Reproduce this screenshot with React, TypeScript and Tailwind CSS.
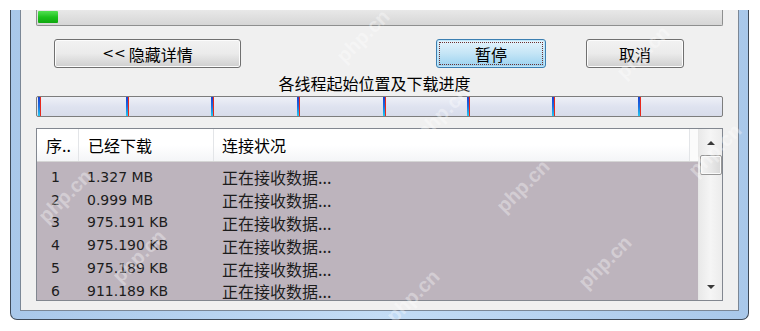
import React from "react";

const cjk = { fontFamily: '"Noto Sans CJK SC", "Noto Sans", sans-serif' };
const tahoma = { fontFamily: '"DejaVu Sans", "Noto Sans CJK SC", sans-serif' };

const rows = [
   { id: 1, done: "1.327 MB" },
   { id: 2, done: "0.999 MB" },
   { id: 3, done: "975.191 KB" },
   { id: 4, done: "975.190 KB" },
   { id: 5, done: "975.189 KB" },
   { id: 6, done: "911.189 KB" },
];

// thread start positions on the bar (px from left)
const marks = [1, 89, 174, 260, 346, 430, 515, 601];

// php.cn watermark spots (x, y centre)
const marksWm = [
   [62, 196],
   [136, 256],
   [520, 186],
   [410, 296],
   [602, 262],
   [712, 150],
   [440, 112],
   [640, 52],
   [360, 36],
];

function Btn({ children, focus, w }: { children: React.ReactNode; focus?: boolean; w: string }) {
   if (focus)
      return (
         <div className={`${w} h-[29px] rounded-[3px] border border-[#3c7fb1] p-[2px] bg-gradient-to-b from-[#e5f4fc] via-[#c4e5f6] to-[#98d1ef] shadow-[inset_0_0_0_1px_#bfe6fa]`}>
            <div className="w-full h-full border border-dotted border-[#6b3030] flex items-center justify-center text-[16px] text-black" style={cjk}>
               {children}
            </div>
         </div>
      );
   return (
      <div className={`${w} h-[29px] rounded-[3px] border border-[#707070] bg-gradient-to-b from-[#f2f2f2] via-[#ebebeb] to-[#cfcfcf] shadow-[inset_0_0_0_1px_#fcfcfc] flex items-center justify-center text-[16px] text-black`} style={cjk}>
         {children}
      </div>
   );
}

export default function App() {
   return (
      <div className="w-[760px] h-[331px] bg-white pt-[10px] pl-[10px] relative overflow-hidden">
         {/* window frame */}
         <div className="w-[739px] h-[310px] border-x border-b border-[#3f4a58] rounded-b-[7px] bg-gradient-to-r from-[#a9c8ea] via-[#c3dcf5] to-[#a9c8ea] px-[9px] pb-[8px]">
            <div className="w-[719px] h-[301px] border-x border-b border-[#7b8796] bg-[#f0f0f0] flex flex-col">
               {/* overall progress */}
               <div className="ml-[15px] w-[687px] h-[16px] border-x border-b border-[#8e8f8f] rounded-b-[2px] bg-gradient-to-b from-[#e8e8e8] to-[#d6d6d6] pt-[1px] pl-px">
                  <div className="w-[20px] h-[12px] rounded-[1px] bg-gradient-to-b from-[#4fe04f] via-[#1cc21c] to-[#0fa80f]" />
               </div>

               {/* buttons */}
               <div className="mt-[13px] flex items-center pl-[33px]">
                  <Btn w="w-[187px]">
                     <span style={tahoma} className="text-[14px] mr-[3px]">&lt;&lt;</span>隐藏详情
                  </Btn>
                  <div className="ml-[195px]">
                     <Btn w="w-[110px]" focus>暂停</Btn>
                  </div>
                  <div className="ml-[40px]">
                     <Btn w="w-[98px]">取消</Btn>
                  </div>
               </div>

               <div className="mt-[5px] h-[20px] leading-[20px] text-center text-[16px] text-black pr-[10px]" style={cjk}>
                  各线程起始位置及下载进度
               </div>

               {/* thread bar */}
               <div className="mt-[3px] ml-[15px] w-[687px] h-[21px] border border-[#7d7d7d] rounded-[2px] bg-gradient-to-b from-[#eef0f7] via-[#dfe3f0] to-[#d8dcea] relative">
                  {marks.map((x) => (
                     <div key={x} className="absolute top-0 bottom-0 flex" style={{ left: x }}>
                        <div className="w-[2px] h-full bg-gradient-to-b from-[#1a3fd0] via-[#1c6ee0] to-[#28c8f0]" />
                        <div className="w-[1px] h-full bg-[#e8281c]" />
                     </div>
                  ))}
               </div>

               {/* thread list */}
               <div className="mt-[11px] ml-[15px] w-[687px] h-[173px] border border-[#828790] bg-white flex">
                  <div className="flex-1 flex flex-col overflow-hidden">
                     <div className="h-[33px] shrink-0 flex border-b border-[#d5d5d5] bg-gradient-to-b from-white via-white to-[#f4f5f7] text-[16px] text-black" style={cjk}>
                        <div className="w-[42px] pl-[9px] flex items-center border-r border-[#e3e5e8]">序..</div>
                        <div className="w-[135px] pl-[9px] flex items-center border-r border-[#e3e5e8]">已经下载</div>
                        <div className="w-[476px] pl-[8px] flex items-center border-r border-[#e3e5e8]">连接状况</div>
                        <div className="flex-1 bg-[#fbfbfb]" />
                     </div>
                     <div className="flex-1 min-h-0 bg-[#bdb4bd] pt-[4px]">
                        {rows.map((r) => (
                           <div key={r.id} className="h-[22.8px] flex items-center text-[#1c1c1c]">
                              <div className="w-[42px] pl-[14px] text-[14px]" style={tahoma}>{r.id}</div>
                              <div className="w-[135px] pl-[8px] text-[14px]" style={tahoma}>
                                 {r.done}
                              </div>
                              <div className="pl-[8px] text-[16px] leading-[20px]" style={cjk}>
                                 正在接收数据...
                              </div>
                           </div>
                        ))}
                     </div>
                  </div>

                  {/* scrollbar */}
                  <div className="w-[24px] border-l border-[#e6e6e6] bg-gradient-to-r from-[#e9e9e9] via-[#f5f5f5] to-[#ececec] flex flex-col items-center">
                     <div className="h-[26px] w-full flex items-center justify-center">
                        <svg width="8" height="5" viewBox="0 0 8 5">
                           <path d="M0 5 L4 1 L8 5 Z" fill="#3a3a3a" />
                        </svg>
                     </div>
                     <div className="w-[22px] h-[20px] rounded-[2px] border border-[#979797] bg-gradient-to-r from-[#f3f3f3] via-[#e8e8e8] to-[#d8d8d8] shadow-[inset_0_0_0_1px_#fafafa]" />
                     <div className="flex-1" />
                     <div className="h-[26px] w-full flex items-center justify-center">
                        <svg width="8" height="5" viewBox="0 0 8 5">
                           <path d="M0 0 L8 0 L4 4 Z" fill="#3a3a3a" />
                        </svg>
                     </div>
                  </div>
               </div>
            </div>
         </div>

         {/* php.cn watermarks */}
         {marksWm.map(([x, y]) => (
            <div
               key={`${x}-${y}`}
               className="absolute pointer-events-none -rotate-45 text-[20px] font-bold text-white/35 leading-none"
               style={{ left: x - 30, top: y - 10, fontFamily: '"Liberation Sans", sans-serif' }}
            >
               php.cn
            </div>
         ))}
      </div>
   );
}
